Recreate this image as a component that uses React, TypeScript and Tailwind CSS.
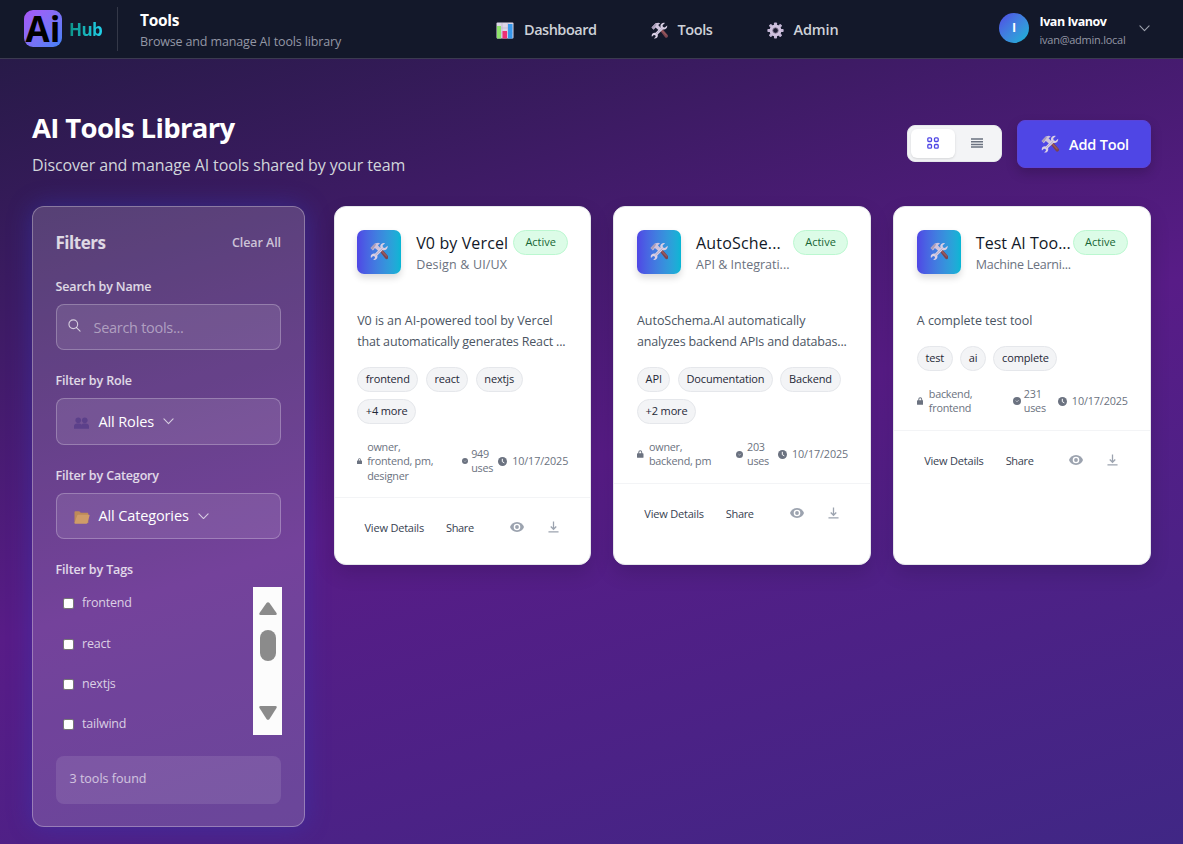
import type { ReactNode } from "react";

type Tool = {
  name: string;
  nameClass: string;
  category: string;
  categoryClass: string;
  description: string[];
  tags: string[];
  roles: string[];
  uses: number;
  lockClass: string;
  usesIconClass: string;
  metaGrid: string;
};

const tools: Tool[] = [
  {
    name: "V0 by Vercel",
    nameClass: "tracking-[0.12px]",
    category: "Design & UI/UX",
    categoryClass: "tracking-[0.16px]",
    description: ["V0 is an AI-powered tool by Vercel", "that automatically generates React ..."],
    tags: ["frontend", "react", "nextjs", "+4 more"],
    roles: ["owner,", "frontend, pm,", "designer"],
    uses: 949,
    lockClass: "w-[5px]",
    usesIconClass: "w-[6px]",
    metaGrid: "grid-cols-[10px_95px_9px_27px_14px_1fr]",
  },
  {
    name: "AutoSche...",
    nameClass: "tracking-[0.17px]",
    category: "API & Integrati...",
    categoryClass: "tracking-[0px]",
    description: ["AutoSchema.AI automatically", "analyzes backend APIs and databas..."],
    tags: ["API", "Documentation", "Backend", "+2 more"],
    roles: ["owner,", "backend, pm"],
    uses: 203,
    lockClass: "w-[6.5px]",
    usesIconClass: "w-[7px]",
    metaGrid: "grid-cols-[12px_87px_11px_31px_14px_1fr]",
  },
  {
    name: "Test AI Too...",
    nameClass: "tracking-[0.02px]",
    category: "Machine Learni...",
    categoryClass: "tracking-[-0.25px]",
    description: ["A complete test tool"],
    tags: ["test", "ai", "complete"],
    roles: ["backend,", "frontend"],
    uses: 231,
    lockClass: "w-[6.5px]",
    usesIconClass: "w-[8px]",
    metaGrid: "grid-cols-[12px_84px_11px_34px_14px_1fr]",
  },
];

function ToolsEmoji({ className = "" }: { className?: string }) {
  return (
    <svg viewBox="0 0 32 32" className={className} fill="none">
      <path d="M16 15l4-3.5 11 12.5a3 3 0 0 1-4.5 4.5z" fill="#7b4450" />
      <path d="M18 15l2-1.5 10 11-1.5 1.5z" fill="#9a5a5c" />
      <path d="M1 10.5L8.5 2.500 14 1.500l3.500 1.200-4 3 6 6.300-4.500 4-6.500-5.500-3.500 4z" fill="#cfc3dc" />
      <path d="M1 10.500L8.500 2.500l2 2-6 9z" fill="#a99bb8" />
      <path d="M30.500 6.500l-4.700 4-3.300-1-.8-3.300 4.600-4.300c-4-1.400-8.600 1.200-8.600 5.800 0 1.100.2 1.900.5 2.700L8.600 20.300c-3.700-1.200-7.600 1.500-7.300 5.400l.4 2 3.600-3.400 2.800.8.700 2.700-3.400 3.100c4.300 1.200 8.300-2 7.400-6.600l-.3-1L22 14c4.700 1.500 9.300-2.600 8.500-7.500z" fill="#d9cfe4" />
      <path d="M9.500 22.500l12-11.300" stroke="#aaa0c0" strokeWidth="1.5" />
    </svg>
  );
}

function ChartEmoji() {
  return (
    <svg viewBox="0 0 18 17" className="h-[17px] w-[18px]">
      <rect x="0.5" y="0.5" width="17" height="16" rx="1" fill="#dcd5e6" />
      <path d="M1 6h16M1 11h16M6 1v15M12 1v15" stroke="#bdb2ce" strokeWidth="0.7" />
      <rect x="1" y="4" width="4" height="12.5" fill="#8ee26b" />
      <rect x="6.5" y="9" width="4.5" height="7.5" fill="#ef2f74" />
      <rect x="12" y="2" width="4.5" height="14.5" fill="#3798ec" />
    </svg>
  );
}

function GearEmoji() {
  return (
    <svg viewBox="-9 -9 18 18" className="h-[17px] w-[17px]">
      {[0, 45, 90, 135].map((a) => (
        <rect key={a} x="-1.6" y="-8.6" width="3.2" height="17.2" rx="0.8" fill="#c4b6d6" transform={`rotate(${a})`} />
      ))}
      <circle r="4.6" fill="none" stroke="#cfc2de" strokeWidth="3.4" />
      <circle r="2.9" fill="#1b1c30" stroke="#93859f" strokeWidth="0.9" />
    </svg>
  );
}

function PeopleEmoji() {
  return (
    <svg viewBox="0 0 16 12" className="h-[12px] w-[15px] opacity-80" fill="#563c88">
      <circle cx="4.5" cy="3.2" r="3" />
      <circle cx="11.5" cy="3.2" r="3" />
      <path d="M0 12V9.500C0 7.500 1.500 6.500 3 6.500h3c1.200 0 2 .8 2 1.600 0-.8.800-1.600 2-1.600h3c1.500 0 3 1 3 3V12z" />
    </svg>
  );
}

function FolderEmoji() {
  return (
    <svg viewBox="0 0 16 13" className="h-[13px] w-[16px]">
      <path d="M0.500 1.300C0.500.6 1 .3 1.600.3h3.600l1.600 1.500h6.400c.7 0 1.100.4 1.100 1.100V12H.5z" fill="#bd8a58" />
      <path d="M3.200 4.500c.2-.5.500-.8 1-.8h10.600c.6 0 .9.400.7 1l-2 7c-.2.600-.6 1-1.200 1H1.200c-.5 0-.8-.3-.7-.7z" fill="#cf9c68" />
    </svg>
  );
}

function Chevron({ className = "" }: { className?: string }) {
  return (
    <svg viewBox="0 0 12 7" className={`h-[6.5px] w-[11px] ${className}`} fill="none" stroke="currentColor" strokeWidth="1.2" strokeLinecap="round" strokeLinejoin="round">
      <path d="M1 1l5 5 5-5" />
    </svg>
  );
}

function NavItem({ icon, label, className }: { icon: ReactNode; label: string; className: string }) {
  return (
    <a className="flex items-center gap-[10px] text-[14.5px] font-semibold text-[#ced1d8]">
      {icon}
      <span className={className}>{label}</span>
    </a>
  );
}

function Header() {
  return (
    <header className="flex h-[59px] shrink-0 items-center border-b border-[#3b3a50] bg-[#13182a] pl-6 leading-none">
      <div className="-mt-[2px] flex h-[37px] w-[38px] items-center justify-center rounded-[9px] bg-linear-to-br from-[#a855f7] to-[#3b82f6]">
        <span className="mt-[2px] text-[35px] leading-[48px] font-bold text-black">Ai</span>
      </div>
      <div className="ml-[7px] w-[34px] bg-linear-to-r from-[#0d9488] to-[#22d3ee] bg-clip-text pt-[2px] text-[17px] leading-[22px] font-bold tracking-[-0.6px] text-transparent">Hub</div>
      <div className="ml-[14px] h-[44px] w-px bg-[#343848]" />
      <div className="ml-[22px] w-[356px] pt-[2px]">
        <div className="text-[15.5px] leading-[20px] font-bold tracking-[-0.3px] text-white">Tools</div>
        <div className="mt-[3px] text-[12.5px] leading-[18px] tracking-[-0.15px] text-[#9397a5]">Browse and manage AI tools library</div>
      </div>
      <nav className="flex items-center pt-[2px]">
        <div className="w-[154.5px]"><NavItem icon={<ChartEmoji />} label="Dashboard" className="tracking-[-0.49px]" /></div>
        <div className="w-[116px]"><NavItem icon={<ToolsEmoji className="h-[17px] w-[17px]" />} label="Tools" className="tracking-[-0.4px]" /></div>
        <div className="w-[232.5px]"><NavItem icon={<GearEmoji />} label="Admin" className="tracking-[-0.14px]" /></div>
      </nav>
      <div className="-mt-[1px] flex items-center">
        <div className="-mt-px flex h-[30px] w-[30px] items-center justify-center rounded-full bg-linear-to-br from-[#4f46e5] to-[#06b6d4] text-[12.5px] font-bold text-white">I</div>
        <div className="ml-[10.5px] w-[99px] pt-[3px]">
          <div className="text-[12.5px] leading-[18px] font-bold tracking-[-0.47px] text-white">Ivan Ivanov</div>
          <div className="text-[11px] leading-[17px] tracking-[-0.25px] text-[#9397a5]">ivan@admin.local</div>
        </div>
        <Chevron className="text-[#9da1ad]" />
      </div>
    </header>
  );
}

function SelectBox({ icon, label }: { icon: ReactNode; label: string }) {
  return (
    <div className="flex h-[46.5px] items-center rounded-[8px] border border-white/25 bg-white/10 pl-[17px]">
      <span className="flex w-[25px] pt-[3px]">{icon}</span>
      <span className="text-[14.5px] font-medium tracking-[-0.13px] text-white">{label}</span>
      <Chevron className="ml-[9px] text-white/70" />
    </div>
  );
}

function Label({ children, className = "" }: { children: ReactNode; className?: string }) {
  return <div className={`text-[12.5px] leading-[18px] font-semibold tracking-[-0.15px] text-white/80 ${className}`}>{children}</div>;
}

function Sidebar() {
  return (
    <aside className="h-[621px] w-[272.5px] shrink-0 rounded-[12px] border border-white/30 bg-white/17 px-[22.5px] shadow-[0_0_24px_rgba(49,60,190,0.45)]">
      <div className="mt-[25px] flex items-center justify-between leading-[22px]">
        <h2 className="text-[17px] font-bold tracking-[-0.47px] text-white/80">Filters</h2>
        <button className="text-[12.5px] font-semibold tracking-[-0.08px] text-white/70">Clear All</button>
      </div>
      <Label className="mt-[24px]">Search by Name</Label>
      <div className="mt-[8px] flex h-[46.5px] items-center rounded-[8px] border border-white/25 bg-white/10 pl-[11px]">
        <svg viewBox="0 0 14 14" className="-mt-[3px] h-[13px] w-[13px] text-white/70" fill="none" stroke="currentColor" strokeWidth="1.2" strokeLinecap="round">
          <circle cx="5.7" cy="5.7" r="4.7" />
          <path d="M9.200 9.200L13 13" />
        </svg>
        <span className="ml-[13px] pt-px text-[14.5px] tracking-[-0.29px] text-white/45">Search tools...</span>
      </div>
      <Label className="mt-[22px] mb-[8px]">Filter by Role</Label>
      <SelectBox icon={<PeopleEmoji />} label="All Roles" />
      <Label className="mt-[22px] mb-[8px]">Filter by Category</Label>
      <SelectBox icon={<FolderEmoji />} label="All Categories" />
      <Label className="mt-[21.5px]">Filter by Tags</Label>
      <div className="-mr-px mt-[8px] flex h-[148px] justify-between">
        <div className="flex flex-col gap-[22.4px] pt-[8px] pl-[7.5px]">
          {["frontend", "react", "nextjs", "tailwind"].map((t) => (
            <label key={t} className="flex h-[18px] items-center gap-[8px] text-[12.5px] font-medium tracking-[-0.2px] text-white/75">
              <span className="h-[11px] w-[11px] rounded-[2px] border border-[#767676] bg-white" />
              {t}
            </label>
          ))}
        </div>
        <div className="flex w-[29px] flex-col items-center bg-[#fcfcfc]">
          <svg viewBox="0 0 18 13" className="mt-[15px] h-[13px] w-[18px] shrink-0" fill="#8b8b8b">
            <path d="M7.500 1a2 2 0 0 1 3 0L17.500 11q.8 2-1 2H1.500q-1.800 0-1-2z" />
          </svg>
          <div className="mt-[15px] h-[31px] w-[16px] shrink-0 rounded-full bg-[#8b8b8b]" />
          <svg viewBox="0 0 18 14" className="mt-[45px] h-[14px] w-[18px] shrink-0" fill="#8b8b8b">
            <path d="M7.500 13a2 2 0 0 0 3 0L17.500 2q.8-2-1-2H1.500Q-.3 0 .5 2z" />
          </svg>
        </div>
      </div>
      <div className="mt-[21px] flex h-[48px] items-center rounded-[8px] bg-white/10 pl-[14px] text-[12.5px] font-medium text-white/65">3 tools found</div>
    </aside>
  );
}

function ToolCard({ tool }: { tool: Tool }) {
  return (
    <article className="h-[359.5px] overflow-hidden rounded-[12px] border border-[#e5e7eb] bg-white shadow-[0_8px_20px_rgba(0,0,0,0.14)]">
      <div className="mx-[22.7px] mt-[23px] flex h-[44px]">
        <div className="flex h-[44px] w-[44px] shrink-0 items-center justify-center rounded-[7px] bg-linear-to-r from-[#4f46e5] to-[#06b6d4] shadow-[0_4px_7px_rgba(0,0,0,0.14)]">
          <ToolsEmoji className="h-[18.5px] w-[18.5px]" />
        </div>
        <div className="ml-[15px] w-[97px] shrink-0 whitespace-nowrap">
          <h3 className={`mt-[2px] text-[16px] leading-[22px] font-medium text-[#111827] ${tool.nameClass}`}>{tool.name}</h3>
          <p className={`mt-px text-[12.5px] leading-[20px] text-[#6b7280] ${tool.categoryClass}`}>{tool.category}</p>
        </div>
        <span className="flex h-[25px] w-[55px] shrink-0 items-center justify-center rounded-full border border-[#bbf7d0] bg-[#dcfce7] pt-px text-[11px] font-medium text-[#166534]">Active</span>
      </div>
      <div className="mx-[22.7px] mt-[36px] text-[12.5px] leading-[21px] whitespace-nowrap text-[#4b5563]">
        {tool.description.map((d) => (
          <div key={d} className="tracking-[-0.17px] first:tracking-[-0.05px]">{d}</div>
        ))}
      </div>
      <div className="mx-[22.7px] mt-[15px] flex flex-wrap gap-x-[7.5px] gap-y-[7px]">
        {tool.tags.map((t) => (
          <span key={t} className="flex h-[25px] items-center rounded-full border border-[#e5e7eb] bg-[#f3f4f6] px-[7.6px] pt-px text-[11px] font-medium tracking-[-0.15px] text-[#1f2937]">{t}</span>
        ))}
      </div>
      <div className={`mx-[22.7px] mt-[16px] grid items-center pb-[14px] text-[10.8px] leading-[14.4px] whitespace-nowrap text-[#6b7280] ${tool.metaGrid}`}>
        <svg viewBox="0 0 10 12" className={tool.lockClass} fill="#6b7280">
          <path d="M2 5V3.500a3 3 0 0 1 6 0V5h1a1 1 0 0 1 1 1v5a1 1 0 0 1-1 1H1a1 1 0 0 1-1-1V6a1 1 0 0 1 1-1zm1.500 0h3V3.500a1.500 1.500 0 0 0-3 0z" />
        </svg>
        <div className="tracking-[-0.25px]">
          {tool.roles.map((r) => (
            <div key={r}>{r}</div>
          ))}
        </div>
        <svg viewBox="0 0 10 10" className={tool.usesIconClass}>
          <circle cx="5" cy="5" r="5" fill="#6b7280" />
          <path d="M3.500 4.500L5 6l2-2" fill="none" stroke="#d5d8de" strokeWidth="1" />
        </svg>
        <div className="tracking-[-0.25px]">
          <div>{tool.uses}</div>
          <div>uses</div>
        </div>
        <svg viewBox="0 0 10 10" className="w-[9px]">
          <circle cx="5" cy="5" r="5" fill="#6b7280" />
          <path d="M4.800 2v3.200L7 6.500" fill="none" stroke="#fff" strokeWidth="1.1" />
        </svg>
        <div className="tracking-[-0.13px]">10/17/2025</div>
      </div>
      <div className="flex items-center border-t border-[#f3f4f6] pt-[21.5px] pl-[30px] text-[11px] leading-[18px] text-[#374151]">
        <span className="w-[81.5px] tracking-[-0.2px]">View Details</span>
        <span className="w-[63.7px] tracking-[-0.35px]">Share</span>
        <svg viewBox="0 0 14 10" className="-mt-[2px] h-[10px] w-[14px]">
          <path d="M7 0C3.500 0 1 2.200 0 5c1 2.800 3.500 5 7 5s6-2.200 7-5c-1-2.800-3.500-5-7-5z" fill="#9ca3af" />
          <circle cx="7" cy="5" r="2.6" fill="none" stroke="#fff" strokeWidth="1.4" />
        </svg>
        <svg viewBox="0 0 12 12" className="-mt-[2px] ml-[24px] h-[12px] w-[11px]" fill="none" stroke="#9ca3af" strokeWidth="1.4">
          <path d="M6 0v8M3 5.500l3 3 3-3M0.500 11.200h11" />
        </svg>
      </div>
    </article>
  );
}

export default function App() {
  return (
    <div className="flex h-[844px] w-[1183px] flex-col overflow-hidden bg-[linear-gradient(163deg,#231a42_0%,#581c87_53%,#402785_100%)] font-['Open_Sans',sans-serif]">
      <Header />
      <main className="px-8 pt-[52px]">
        <div className="flex justify-between">
          <div>
            <h1 className="text-[27.5px] leading-[34px] font-bold tracking-[-0.65px] text-white">AI Tools Library</h1>
            <p className="mt-[8px] text-[16px] leading-[24px] tracking-[-0.12px] text-[#d1d5db]">Discover and manage AI tools shared by your team</p>
          </div>
          <div className="flex items-center gap-[15px]">
            <div className="mb-[2px] flex h-[37px] w-[95px] items-center rounded-[8px] border border-[#e5e7eb] bg-[#f3f4f6] p-[3px]">
              <div className="flex h-[29px] w-[44px] shrink-0 items-center justify-center rounded-[6px] bg-white shadow-sm">
                <svg viewBox="0 0 12 12" className="h-[12px] w-[12px]" fill="none" stroke="#4f46e5" strokeWidth="1.3">
                  <rect x="0.8" y="0.8" width="3.7" height="3.7" rx="1" />
                  <rect x="7.5" y="0.8" width="3.7" height="3.7" rx="1" />
                  <rect x="0.8" y="7.5" width="3.7" height="3.7" rx="1" />
                  <rect x="7.5" y="7.5" width="3.7" height="3.7" rx="1" />
                </svg>
              </div>
              <div className="flex w-[44px] shrink-0 items-center justify-center">
                <svg viewBox="0 0 12 10" className="h-[10px] w-[12px]" stroke="#6b7280" strokeWidth="1.5">
                  <path d="M0 1h12M0 3.700h12M0 6.400h12M0 9.100h12" />
                </svg>
              </div>
            </div>
            <button className="flex h-[48px] w-[134px] items-center rounded-[8px] border border-[#5a43d8] bg-[#4f46e5] pl-[23px] text-[14.5px] font-semibold tracking-[-0.17px] text-white shadow-[0_5px_12px_rgba(0,0,0,0.18)]">
              <ToolsEmoji className="mr-[10px] h-[18px] w-[18px]" />
              <span className="pt-px">Add Tool</span>
            </button>
          </div>
        </div>
        <div className="mt-[28.7px] flex gap-[29px]">
          <Sidebar />
          <div className="grid flex-1 grid-cols-3 items-start gap-[22px]">
            {tools.map((t) => (
              <ToolCard key={t.name} tool={t} />
            ))}
          </div>
        </div>
      </main>
    </div>
  );
}
